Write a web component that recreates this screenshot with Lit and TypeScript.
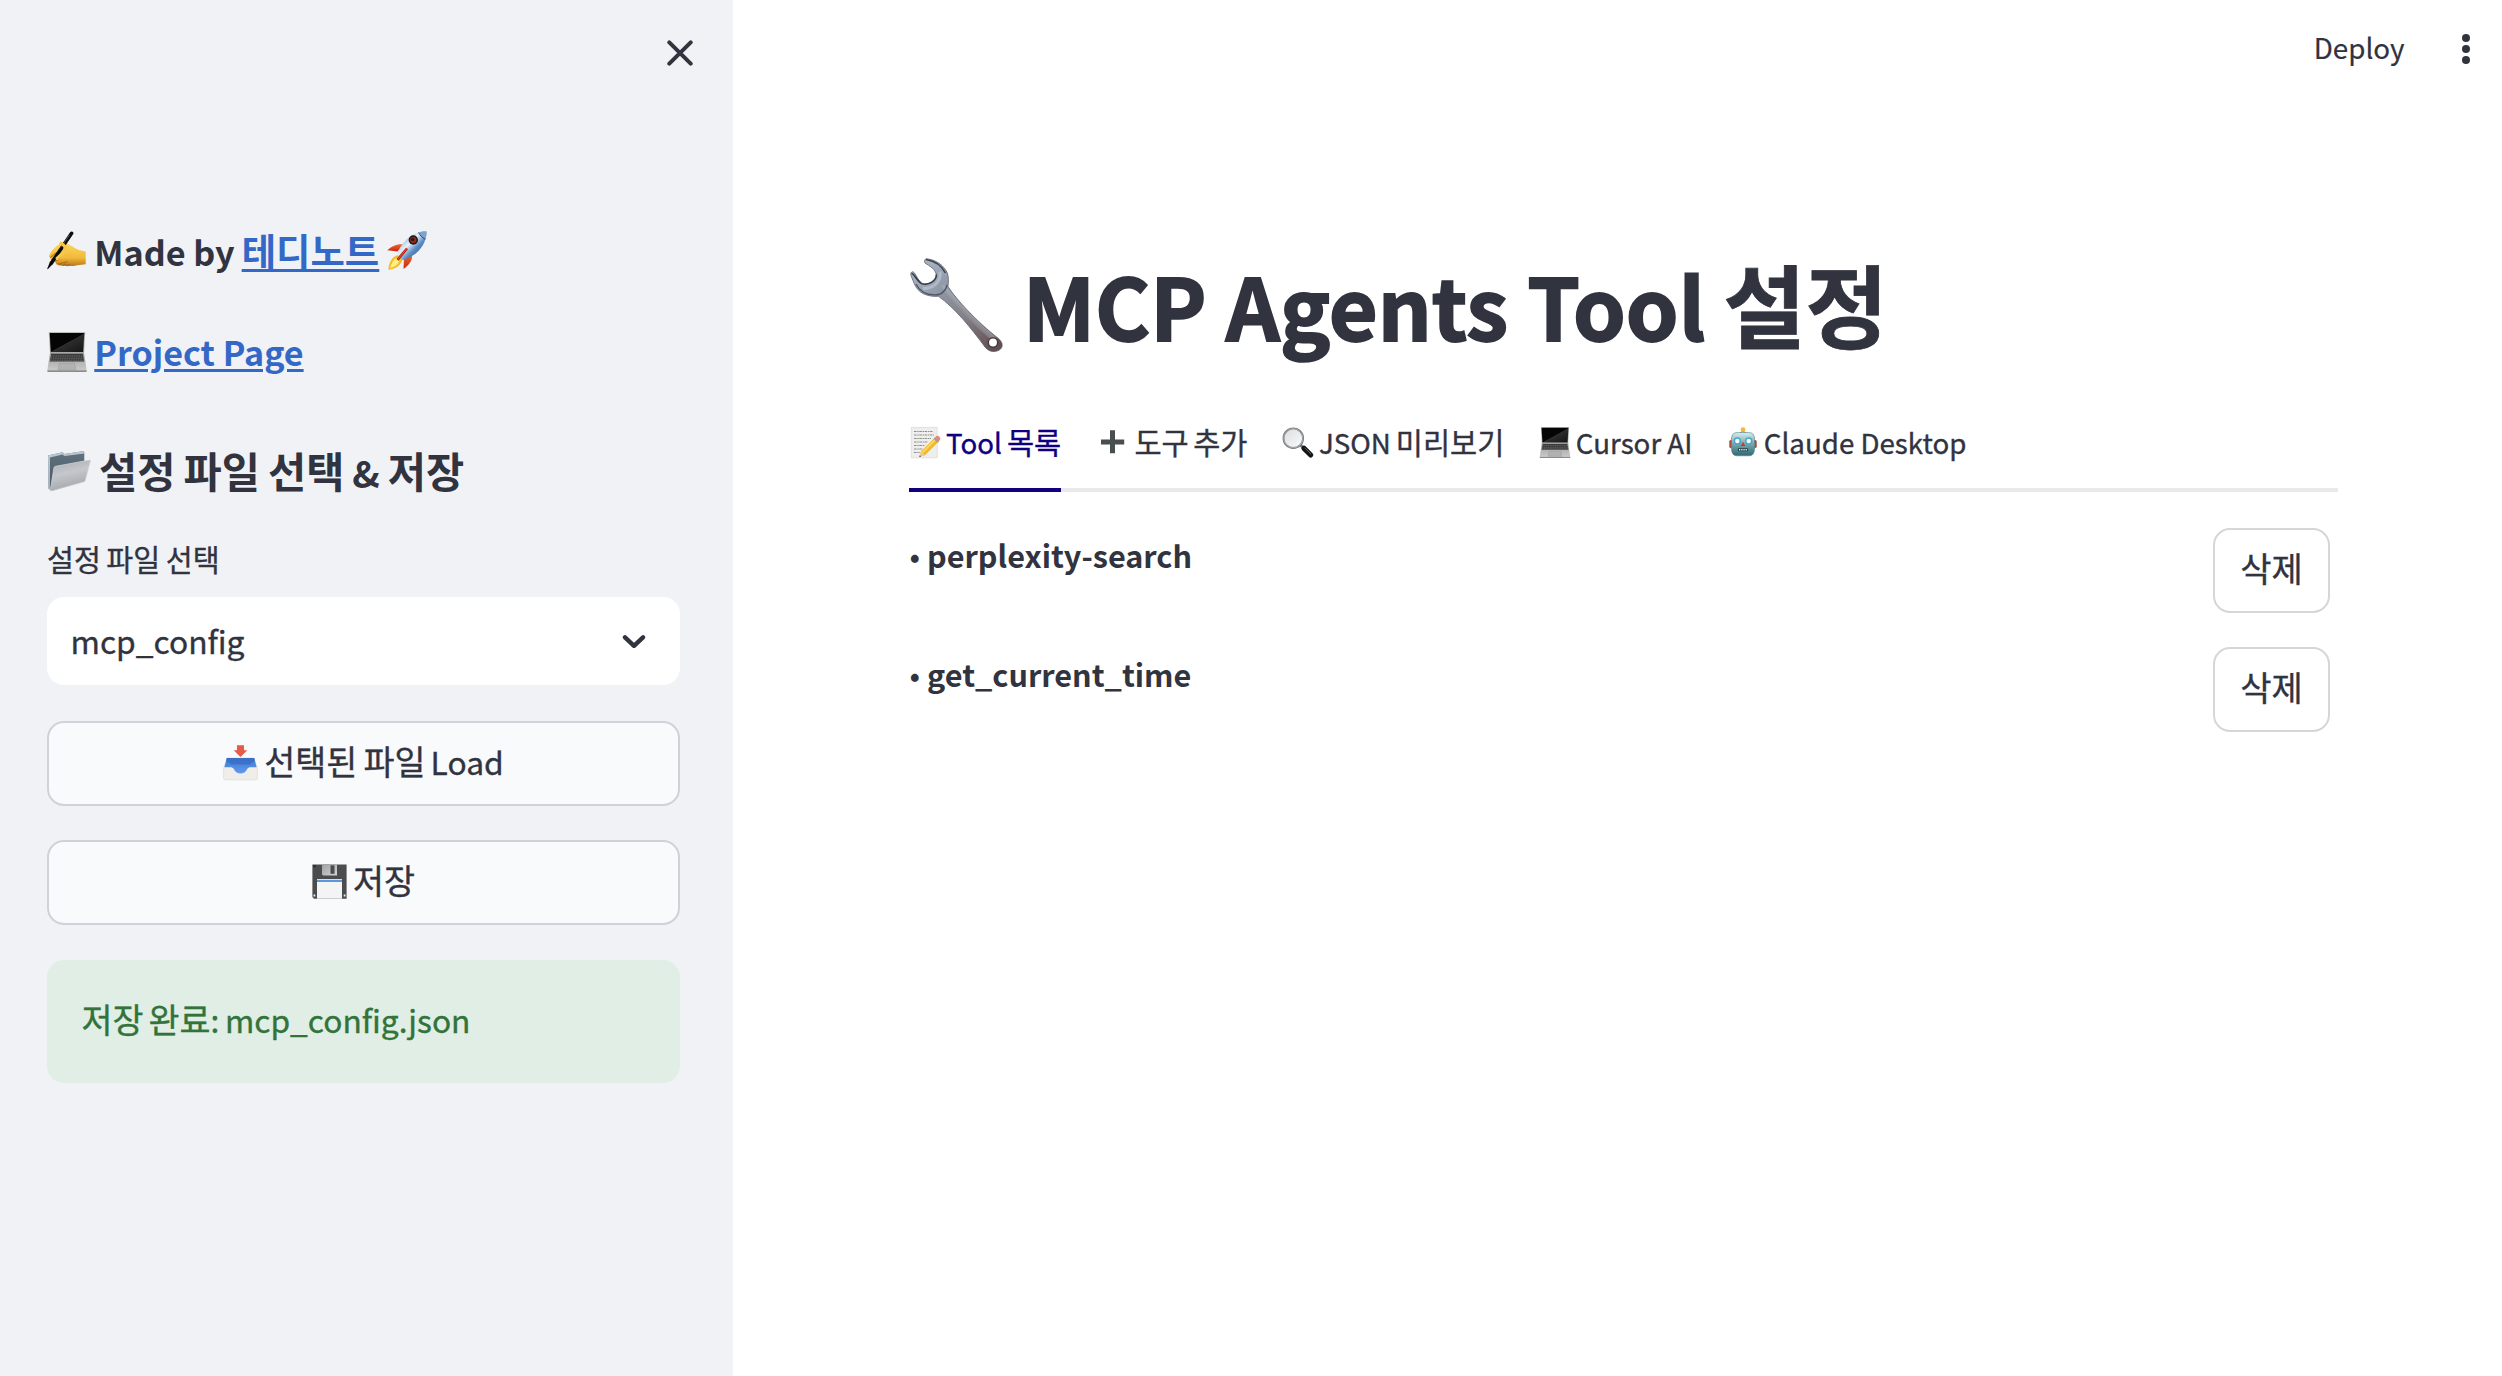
import { LitElement, html, css, nothing } from "lit";
import type { TemplateResult } from "lit";
import { customElement, property, state } from "lit/decorators.js";
import { classMap } from "lit/directives/class-map.js";

const writingHand = html`<svg class="emoji e40" viewBox="0 0 40 40">
  <defs><linearGradient id="hand" x1="0" y1="0" x2="0" y2="1"><stop offset="0" stop-color="#fbd95f"/><stop offset=".65" stop-color="#f3b93a"/><stop offset="1" stop-color="#b9771c"/></linearGradient></defs>
  <path d="M15 11.5C18 10.6 20 12 22 13.500C26 15 29 18.500 33 19.300L38.700 20.500V33.200L30 34.300C26 35.400 20 35.200 15.500 34.800C11 34.500 8 32.500 8.300 30.500C5.500 31.500 3.500 31 3.800 28L2 25.500C3 20.500 9 15 15 11.500Z" fill="url(#hand)"/>
  <path d="M8.500 30.300C12 28.500 14 26 14.800 23.200M9.500 33C13 33 17 31.500 21 30.500M3.500 26.500C6 24 8 22 11.500 21" stroke="#b87418" stroke-width="1.100" fill="none"/>
  <path d="M12 34.500L14 32.500L16 34.700L18.200 32.700L20.500 34.800L23 33" stroke="#8f5a14" stroke-width=".8" fill="none"/>
  <path d="M24.600 2.300L4.600 31.800" stroke="#0c0c0e" stroke-width="3.600" stroke-linecap="round"/>
  <path d="M3.100 30.500L6.300 32.600L.8 38.300L.2 37.800Z" fill="#0c0c0e"/>
  <path d="M22.600 3.800L14 16.300" stroke="#5b5d64" stroke-width=".9"/>
  <path d="M14 12.500C18 14 19 17 17.500 20C15.500 22.500 13.500 24.500 10.300 27.300" fill="none" stroke="#f7c94b" stroke-width="3.400" stroke-linecap="round"/>
</svg>`;

const rocket = html`<svg class="emoji e40" viewBox="0 0 40 40">
  <defs>
    <linearGradient id="rk" x1="0" y1="0" x2="1" y2="1"><stop offset=".2" stop-color="#8db4e0"/><stop offset=".42" stop-color="#e9f1f9"/><stop offset=".6" stop-color="#5d8ec6"/><stop offset=".85" stop-color="#33547f"/></linearGradient>
    <linearGradient id="fin" x1="0" y1="0" x2="0" y2="1"><stop offset="0" stop-color="#f0642e"/><stop offset="1" stop-color="#c9280e"/></linearGradient>
  </defs>
  <path d="M17 13.500C10 12.500 5 15 .3 19.300L10.500 20.500Z" fill="url(#fin)"/>
  <path d="M24.500 23C26.500 29 22 34 16.500 38L17 27.500Z" fill="url(#fin)"/>
  <path d="M10.500 24C5 26 2 31 1.300 38.700C7 38.600 13 35.500 15.500 29Z" fill="#f6b92c"/>
  <path d="M9.500 27C6 29 4 33 3.200 37C7.500 36 11 33.500 12.500 30Z" fill="#fff27c"/>
  <path d="M39.600 .4C30 0 18 5 10.800 21C10 23.200 12.500 27.500 16 29C32 24 39.500 12 39.600 .4Z" fill="url(#rk)"/>
  <path d="M39.600 .4C36.500 .2 34 .7 31.500 1.500C33 4.500 35 6.600 38.300 8.200C39.200 5.500 39.600 3 39.600 .4Z" fill="#7ba3d0"/>
  <path d="M31.500 1.500C33 4.500 35 6.600 38.300 8.200" stroke="#27405f" stroke-width=".9" fill="none"/>
  <circle cx="26.300" cy="9" r="4.700" fill="#1d1714"/><circle cx="26.300" cy="9" r="3.200" fill="#8c2a1c"/><circle cx="25.700" cy="8.400" r="1.600" fill="#38120c"/>
  <path d="M20 17.500L10.500 28.800" stroke="#b31f0d" stroke-width="2.600"/><path d="M20 17.300L11 28" stroke="#ef5a30" stroke-width="1"/>
</svg>`;

const laptop = (size: string) => html`<svg class="emoji ${size} laptop" viewBox="0 0 40 40">
  <defs>
    <linearGradient id="lid" x1="0" y1="0" x2="1" y2="1"><stop offset=".5" stop-color="#050505"/><stop offset=".52" stop-color="#2d2d2d"/><stop offset="1" stop-color="#151515"/></linearGradient>
    <linearGradient id="deck" x1="0" y1="0" x2="0" y2="1"><stop offset="0" stop-color="#9d9d9d"/><stop offset="1" stop-color="#c9c9c9"/></linearGradient>
  </defs>
  <path d="M1.800 .3H38.200L37 21.500H3Z" fill="#a9abab"/>
  <path d="M2.700 1.100H37.300L36.200 20H3.800Z" fill="url(#lid)"/>
  <path d="M3 20.800H37L39.700 38.500H.3Z" fill="url(#deck)"/>
  <path d="M4.200 21.800H35.800L37.300 29.500H2.700Z" fill="#3a3a3a"/>
  <path d="M3.800 24H36.200M3.500 26.200H36.500M3.100 28.200H36.900" stroke="#8a8a8a" stroke-width=".6" stroke-dasharray="1.600 .7"/>
  <path d="M12.300 31.300H27.700L28.800 37.800H11.200Z" fill="#b2b2b2" stroke="#989898" stroke-width=".5"/>
  <path d="M.3 38.300H39.700V39.200Q39.600 39.900 38.800 39.900H1.200Q.4 39.900 .3 39.200Z" fill="#8c8c8c"/>
</svg>`;

const folder = html`<svg class="emoji folder" viewBox="0 0 44 40">
  <defs>
    <linearGradient id="fb" x1="0" y1="0" x2="0" y2="1"><stop offset="0" stop-color="#627380"/><stop offset="1" stop-color="#45545f"/></linearGradient>
    <linearGradient id="ff" x1="0" y1="0" x2=".3" y2="1"><stop offset="0" stop-color="#a7acb2"/><stop offset=".5" stop-color="#c5c7cb"/><stop offset="1" stop-color="#a3a7ad"/></linearGradient>
  </defs>
  <path d="M1 4.500L15.500 1.200L17.500 3L36 .3Q37.300 .3 37.300 1.700V30L4.500 40L1.500 37.500Z" fill="url(#fb)"/>
  <path d="M1 4.500L15.500 1.200L17.500 3L36 .3Q37.300 .3 37.300 1.700V2.500L17.500 5L15.500 3.500L3 6.500L2.800 38.700L1.500 37.500Z" fill="#bac6cf"/>
  <path d="M8.500 15.300L42.600 9Q43.600 9 43.400 10.200L38.300 29.500Q38 30.500 36.800 30.900L4.800 39.900Q3.200 40 3.400 38.500L6.900 16.800Q7.200 15.600 8.500 15.300Z" fill="url(#ff)" stroke="#d5d8db" stroke-width=".7"/>
</svg>`;

const wrench = html`<svg class="emoji wrench" viewBox="0 0 94 94">
  <defs>
    <linearGradient id="wr" gradientUnits="userSpaceOnUse" x1="10" y1="8" x2="84" y2="90"><stop offset="0" stop-color="#a9b4c3"/><stop offset=".3" stop-color="#8d97a5"/><stop offset=".62" stop-color="#847f86"/><stop offset="1" stop-color="#634f52"/></linearGradient>
    <linearGradient id="wh" gradientUnits="userSpaceOnUse" x1="62" y1="46" x2="50" y2="58"><stop offset="0" stop-color="#747985"/><stop offset=".45" stop-color="#b3b6be"/><stop offset="1" stop-color="#6b676f"/></linearGradient>
  </defs>
  <path d="M16.500 .8C25 1.500 34 7 37.300 15C38.700 19 38.600 23.500 38 28.500C46 41 66 63 88.500 80.500C95 86 92.500 93.200 84 93.500C80 93.600 77.500 92 75 89C61 70 45 50 28.500 38.300C17 39 8 35 4.200 25.500C2.500 21 .8 18 .7 15.500C1.800 13 3.500 13.700 4.500 15C7 18.500 8.500 23 12 25.500C18 27.300 25.500 23.500 26.300 17C26 11.500 19.500 8 15 5C14 3 14.500 1 16.500 .8Z" fill="url(#wr)" stroke="#5b616c" stroke-width=".8"/>
  <path d="M34 29.500C45 44 64 64.500 84 81" stroke="url(#wh)" stroke-width="5" fill="none" stroke-linecap="round" opacity=".55"/>
  <path d="M16 1.500C25 3 32 8 35.500 15" stroke="#3d434c" stroke-width="1.600" fill="none"/>
  <path d="M1.500 15.500C4 15 6 22 11.500 25.600C19 28 26.500 22.500 26.400 16.500" stroke="#343a43" stroke-width="1.500" fill="none"/>
  <path d="M6 26C11 36 21 37.500 29 36.500C33 35 36 32 37 27" stroke="#4d5561" stroke-width="1.300" fill="none"/>
  <path d="M30 13.500C31.500 22 25 30.500 13 30.500" stroke="#c2ccd8" stroke-width="3" fill="none" opacity=".6"/>
  <circle cx="83" cy="84.500" r="4.700" fill="#fff" stroke="#463a3c" stroke-width="1.500"/>
</svg>`;

const memo = html`<svg class="emoji tabicon" viewBox="0 0 32 31">
  <path d="M2.300 .4H28.200V30.800H2.300Z" fill="#eeeeec" stroke="#d2d2d0" stroke-width=".6"/>
  <path d="M5 4.500H24M5 8H25M5 11.500H22M5 15H19M5 18.500H16M5 22H14M5 25.500H11" stroke="#8f8f8f" stroke-width="1" stroke-dasharray="2.600 .7 1.400 .6"/>
  <path d="M26 10.500L30 14.300L16 28.300L10.500 29.800L12 24.500Z" fill="#f3b928"/>
  <path d="M27.200 11.700L13.300 25.800" stroke="#fbdc6a" stroke-width="1.600"/>
  <path d="M12 24.500L16 28.300L10.500 29.800Z" fill="#ecc99b"/><path d="M10.900 28.300L12 29.400L10.300 29.900Z" fill="#333"/>
  <path d="M25 11.500L27.500 9Q29 8 30.500 9.700Q32 11.300 31 12.800L29 15.300Z" fill="#e8877e"/><path d="M24.600 11.900L26 10.500L30 14.400L28.600 15.700Z" fill="#9aa3a6"/>
</svg>`;

const plus = html`<svg class="emoji tabicon" viewBox="0 0 32 31">
  <path d="M15.500 3.300V26.300M4 15H27.200" stroke="#494e4e" stroke-width="5" fill="none"/>
</svg>`;

const magnifier = html`<svg class="emoji tabicon" viewBox="0 0 32 31">
  <defs><linearGradient id="gl" x1="0" y1="0" x2="1" y2="1"><stop offset="0" stop-color="#d9dcdf"/><stop offset="1" stop-color="#fbfcfc"/></linearGradient></defs>
  <path d="M18.500 18L22.500 22" stroke="#777" stroke-width="3"/>
  <path d="M22 21.300L28.700 28" stroke="#151515" stroke-width="5.200" stroke-linecap="round"/>
  <path d="M22.800 20.900L29 27" stroke="#666" stroke-width="1"/>
  <circle cx="11.300" cy="11.200" r="9.800" fill="url(#gl)" stroke="#74787b" stroke-width="1.900"/>
  <circle cx="11.300" cy="11.200" r="9.600" fill="none" stroke="#c9cccf" stroke-width=".6"/>
</svg>`;

const robot = html`<svg class="emoji tabicon" viewBox="0 0 32 31">
  <defs><linearGradient id="rb" x1="0" y1="0" x2="0" y2="1"><stop offset="0" stop-color="#dfeeed"/><stop offset=".5" stop-color="#76a7ad"/><stop offset="1" stop-color="#2f6874"/></linearGradient></defs>
  <rect x="2.300" y="13" width="4" height="8" rx="1.500" fill="#b5443b"/><rect x="25.700" y="13" width="4" height="8" rx="1.500" fill="#b5443b"/>
  <path d="M13 5.600Q16 3.400 19 5.600V7.200H13Z" fill="#594b8c"/><circle cx="16" cy="2.700" r="2.400" fill="#f4b93c"/>
  <path d="M8 5.800Q16 4.600 24 5.800Q27 6.500 27.500 11L27.700 20Q27.700 28.700 22.500 28.800H9.500Q4.300 28.700 4.300 20L4.500 11Q5 6.500 8 5.800Z" fill="url(#rb)" stroke="#4f858d" stroke-width=".6"/>
  <path d="M16 14.800L18.300 19H13.700Z" fill="#d3392b"/>
  <circle cx="10.300" cy="14" r="3.700" fill="#3fa9cf"/><circle cx="21.700" cy="14" r="3.700" fill="#3fa9cf"/><circle cx="10.300" cy="14" r="2.200" fill="#fff"/><circle cx="21.700" cy="14" r="2.200" fill="#fff"/>
  <rect x="10.800" y="21.300" width="10.400" height="3" rx="1.300" fill="#24424a"/><path d="M12 22.800H20.400" stroke="#e8efef" stroke-width="1.500" stroke-dasharray="1.300 .9"/>
</svg>`;

const inbox = html`<svg class="emoji e35" viewBox="0 0 35 35">
  <defs><linearGradient id="in" x1="0" y1="0" x2="0" y2="1"><stop offset="0" stop-color="#3f77d0"/><stop offset="1" stop-color="#5f9bf0"/></linearGradient></defs>
  <path d="M4 13H31L34.400 23.500V33Q34.400 34.800 32.600 34.800H2.400Q.6 34.800 .6 33V23.500Z" fill="#f0eeeb" stroke="#d7d5d2" stroke-width=".6"/>
  <path d="M3.800 13H31.200L33.600 22.300H26.500Q24.500 22.700 23.300 25.500Q21.500 28.500 17.500 28.500Q13.500 28.500 11.700 25.500Q10.500 22.700 8.500 22.300H1.400Z" fill="url(#in)"/>
  <path d="M3.800 13H31.200L31.800 15.300L27 19.500H8L3.200 15.300Z" fill="#3468bd" opacity=".6"/>
  <path d="M14 .3H21V5.200H24.300L17.500 12L10.700 5.200H14Z" fill="#e65a49"/>
</svg>`;

const floppy = html`<svg class="emoji e35" viewBox="0 0 35 35">
  <defs><linearGradient id="sh" x1="0" y1="0" x2="1" y2="1"><stop offset="0" stop-color="#9fa1a3"/><stop offset="1" stop-color="#d2d3d4"/></linearGradient></defs>
  <path d="M.4 .4H34.600V34.700H2L.4 33Z" fill="#4b4c4d"/>
  <path d="M10 .4H25V11.600H11.300L10 10.500Z" fill="url(#sh)"/><path d="M18.500 1.300H22.500V9.800H18.500Z" fill="#4b4c4d"/>
  <path d="M5 15H30V34.700H5Z" fill="#f4f4f4"/><path d="M5 15.800H30V18H5Z" fill="#5d94dd"/>
  <rect x="1.500" y="30.500" width="1.800" height="2" fill="#eee"/><rect x="31.700" y="30.500" width="1.800" height="2" fill="#eee"/>
  <rect x="1.500" y="1.200" width="2" height="2" fill="#222"/>
</svg>`;

@customElement("config-sidebar")
export class ConfigSidebar extends LitElement {
  @property() config = "mcp_config";
  static styles = css`
    :host { display: flex; flex-direction: column; box-sizing: border-box; width: 733px; height: 100%; flex: none; background: #f0f2f6; padding: 40px 53px 0 47px; }
    svg { display: block; }
    .close { align-self: flex-end; width: 26px; height: 26px; margin-right: -13px; }
    .line { white-space: nowrap; font-weight: 700; font-size: 34.2px; line-height: 50px; height: 50px; }
    .made { margin-top: 160px; }
    .project { margin-top: 50px; }
    .heading { margin-top: 68px; font-size: 37.1px; line-height: 56px; height: 56px; }
    .run { line-height: 0; }
    .emoji { display: inline-block; overflow: visible; }
    .e40 { width: 40px; height: 40px; vertical-align: -5.3px; margin-right: 7.300px; }
    .laptop { vertical-align: -6px; }
    .folder { width: 44px; height: 40px; vertical-align: -3px; margin-right: 8px; }
    .e35 { width: 35px; height: 35px; vertical-align: -4.500px; margin-right: 6px; }
    .rocket .emoji { margin: 0 0 0 8px; }
    a { color: #3468c6; text-decoration: underline; text-decoration-thickness: 3px; text-underline-offset: 3px; line-height: 0; }
    .teddy { font-size: 37.400px; margin-left: 7px; text-decoration-skip-ink: none; }
    .project a { font-size: 34.100px; }
    .h-ko { font-size: 41.500px; word-spacing: -1.300px; }
    .amp { margin: 0 8px; }
    .label { margin-top: 36px; font-size: 29.300px; line-height: 44px; height: 44px; word-spacing: -1.100px; }
    .select { display: flex; align-items: center; justify-content: space-between; height: 88px; box-sizing: border-box; margin-top: 17px; padding: 0 34px 2px 23.500px; border-radius: 17px; background: #fff; font-size: 31.750px; }
    .select svg { width: 24px; height: 15px; margin-top: 2px; }
    .btn { display: block; width: 100%; box-sizing: border-box; height: 84.500px; padding: 0 0 4px; border: 2px solid #d0d2d7; border-radius: 17px; background: #f9fafc; color: inherit; font: inherit; font-size: 31.750px; line-height: 76px; text-align: center; white-space: nowrap; }
    .load { margin-top: 36px; }
    .save { margin-top: 34.500px; }
    .ko { font-size: 33.700px; word-spacing: -1.200px; }
    .en { margin-left: 5px; font-size: 31.750px; }
    .alert { height: 123px; box-sizing: border-box; margin-top: 35.500px; padding: 0 34.500px 5px; border-radius: 17px; background: #e0eee6; color: #32733a; font-size: 31.700px; line-height: 118px; white-space: nowrap; word-spacing: -1.500px; }
    .alert .ko { word-spacing: -2.500px; }
    .label, .select, .btn, .alert { -webkit-text-stroke: .35px currentColor; }
  `;
  render() {
    return html`
      <svg class="close" viewBox="0 0 26 26"><path d="M2.300 2.300L23.700 23.700M23.700 2.300L2.300 23.700" stroke="#31333f" stroke-width="4" stroke-linecap="round"/></svg>
      <div class="line made">${writingHand}<span class="run">Made by</span><a class="teddy">테디노트</a><span class="rocket">${rocket}</span></div>
      <div class="line project">${laptop("e40")}<a>Project Page</a></div>
      <div class="line heading">${folder}<span class="run h-ko">설정 파일 선택</span><span class="run amp">&amp;</span><span class="run h-ko">저장</span></div>
      <div class="label">설정 파일 선택</div>
      <div class="select"><span>${this.config}</span><svg viewBox="0 0 24 15"><path d="M3 3.300L12 11.800L21 3.300" fill="none" stroke="#31333f" stroke-width="4.400" stroke-linecap="round" stroke-linejoin="round"/></svg></div>
      <button class="btn load">${inbox}<span class="run ko">선택된 파일</span><span class="run en">Load</span></button>
      <button class="btn save">${floppy}<span class="run ko">저장</span></button>
      <div class="alert"><span class="run ko">저장 완료</span>: ${this.config}.json</div>`;
  }
}

interface Tab { icon: TemplateResult; parts: { text: string; ko?: boolean }[]; }

const TABS: Tab[] = [
  { icon: memo, parts: [{ text: "Tool" }, { text: "목록", ko: true }] },
  { icon: plus, parts: [{ text: "도구 추가", ko: true }] },
  { icon: magnifier, parts: [{ text: "JSON" }, { text: "미리보기", ko: true }] },
  { icon: laptop("tabicon"), parts: [{ text: "Cursor AI" }] },
  { icon: robot, parts: [{ text: "Claude Desktop" }] },
];

@customElement("tool-tabs")
export class ToolTabs extends LitElement {
  @state() private active = 0;
  static styles = css`
    :host { display: flex; gap: 34.500px; box-sizing: border-box; height: 80.500px; border-bottom: 4px solid #e9e9eb; font-size: 27.700px; line-height: 60px; -webkit-text-stroke: .35px currentColor; }
    .tab { height: 76.500px; white-space: nowrap; cursor: pointer; }
    .tab:first-child { margin-right: 1.700px; }
    .tab.active { height: 80.500px; box-sizing: border-box; border-bottom: 4px solid #10007f; color: #10007f; }
    .ko { font-size: 29.500px; line-height: 0; word-spacing: -2.200px; }
    .part + .ko { margin-left: 5px; }
    .emoji { width: 32px; height: 31px; vertical-align: -4.800px; margin-right: 5px; overflow: visible; -webkit-text-stroke: 0; }
  `;
  render() {
    return TABS.map((tab, i) => html`<div class=${classMap({ tab: true, active: i === this.active })} @click=${() => (this.active = i)}>${tab.icon}${tab.parts.map((p) => html`<span class=${classMap({ part: true, ko: !!p.ko })}>${p.text}</span>`)}</div>`);
  }
}

@customElement("app-root")
export class AppRoot extends LitElement {
  @state() private tools = ["perplexity-search", "get_current_time"];
  static styles = css`
    :host { display: flex; width: 100%; height: 100vh; overflow: hidden; background: #fff; color: #31333f; font-family: "Noto Sans CJK KR", "Noto Sans", sans-serif; }
    .main { flex: 1; min-width: 0; display: flex; flex-direction: column; }
    .toolbar { display: flex; justify-content: flex-end; align-items: center; gap: 57.500px; height: 98px; box-sizing: border-box; padding: 0 32px 4px 0; font-size: 27.800px; line-height: 40px; -webkit-text-stroke: .2px currentColor; }
    .toolbar svg { width: 8px; height: 30px; margin-top: 4px; }
    .content { padding: 146px 164px 0 176px; }
    .title { margin: 0; font-size: 84.400px; line-height: 120px; height: 120px; font-weight: 700; white-space: nowrap; -webkit-text-stroke: 1.800px currentColor; }
    .title .ko { font-size: 89.500px; line-height: 0; margin-left: 18px; -webkit-text-stroke: .8px currentColor; }
    .wrench { width: 94px; height: 94px; vertical-align: -11px; margin: 0 19px 0 1px; overflow: visible; }
    tool-tabs { margin-top: 47.500px; }
    .list { display: flex; flex-direction: column; gap: 34.500px; margin-top: 36px; }
    .row { display: flex; justify-content: space-between; padding-right: 8px; height: 84.500px; }
    .name { padding: 2px 0 0 .5px; font-size: 30.600px; line-height: 50px; font-weight: 700; white-space: nowrap; }
    .bullet { font-weight: 400; font-size: 31px; line-height: 0; margin-right: 7px; }
    .del { width: 117px; height: 84.500px; box-sizing: border-box; border: 2px solid #d6d6d9; border-radius: 17px; background: #fff; color: inherit; font: inherit; font-size: 34px; line-height: 74px; padding: 0 0 5px; -webkit-text-stroke: .35px currentColor; }
  `;
  render() {
    return html`
      <config-sidebar></config-sidebar>
      <div class="main">
        <div class="toolbar"><span>Deploy</span><svg viewBox="0 0 8 30"><g fill="#31333f"><circle cx="4" cy="4" r="4"/><circle cx="4" cy="15" r="4"/><circle cx="4" cy="26" r="4"/></g></svg></div>
        <div class="content">
          <h1 class="title">${wrench}<span>MCP Agents Tool</span><span class="ko">설정</span></h1>
          <tool-tabs></tool-tabs>
          <div class="list">
            ${this.tools.length ? this.tools.map((name) => html`<div class="row"><div class="name"><span class="bullet">•</span>${name}</div><button class="del">삭제</button></div>`) : nothing}
          </div>
        </div>
      </div>`;
  }
}
